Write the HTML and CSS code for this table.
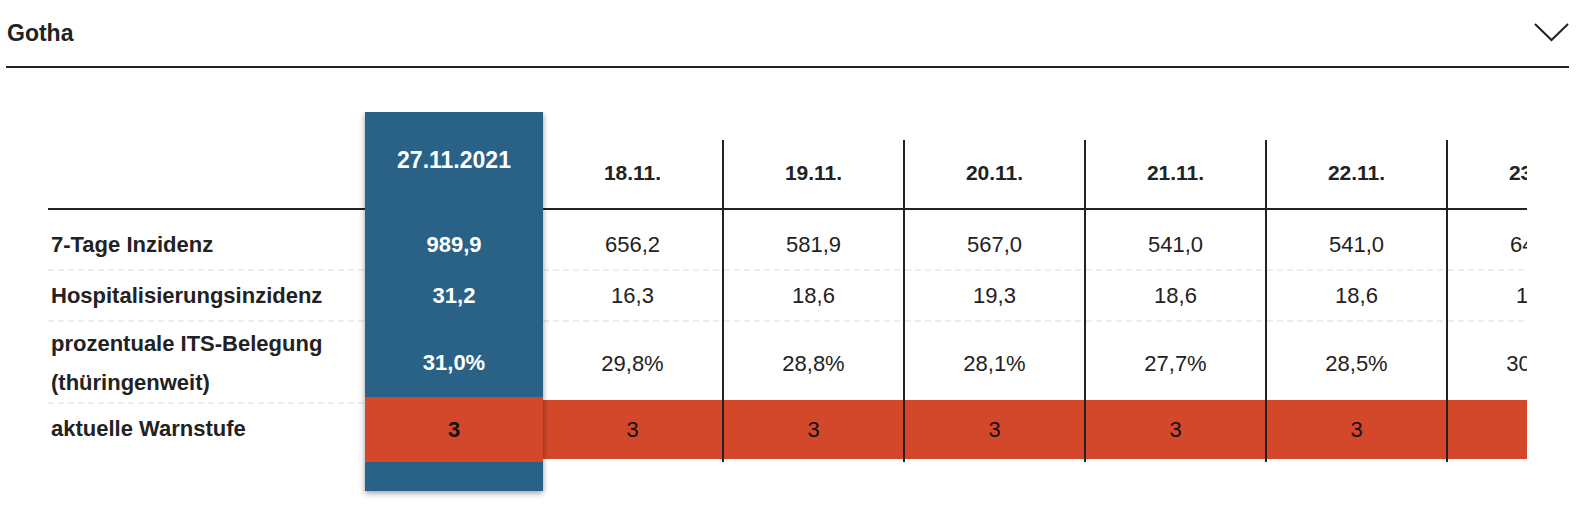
FILE: index.html
```html
<!DOCTYPE html>
<html lang="de">
<head>
<meta charset="utf-8">
<title>Gotha</title>
<link rel="stylesheet" href="styles.css">
</head>
<body>
<header class="panel-head">
  <h2 class="title">Gotha</h2>
  <svg class="chev" width="36" height="20" viewBox="0 0 36 20" aria-hidden="true">
    <polyline points="1,2 17.5,18 34,2" fill="none" stroke="#222" stroke-width="2"/>
  </svg>
</header>
<div class="table">
  <div class="col labels">
    <div class="cell head"></div>
    <div class="cell r1">7-Tage Inzidenz</div>
    <div class="cell r2">Hospitalisierungsinzidenz</div>
    <div class="cell r3">prozentuale ITS-Belegung<br>(thüringenweit)</div>
    <div class="cell r4">aktuelle Warnstufe</div>
  </div>
  <div class="col current">
    <div class="cell head">27.11.2021</div>
    <div class="cell r1">989,9</div>
    <div class="cell r2">31,2</div>
    <div class="cell r3">31,0%</div>
    <div class="cell r4 warn">3</div>
  </div>
  <div class="col day">
    <div class="cell head">18.11.</div>
    <div class="cell r1">656,2</div>
    <div class="cell r2">16,3</div>
    <div class="cell r3">29,8%</div>
    <div class="cell r4 warn">3</div>
  </div>
  <div class="col day">
    <div class="cell head">19.11.</div>
    <div class="cell r1">581,9</div>
    <div class="cell r2">18,6</div>
    <div class="cell r3">28,8%</div>
    <div class="cell r4 warn">3</div>
  </div>
  <div class="col day">
    <div class="cell head">20.11.</div>
    <div class="cell r1">567,0</div>
    <div class="cell r2">19,3</div>
    <div class="cell r3">28,1%</div>
    <div class="cell r4 warn">3</div>
  </div>
  <div class="col day">
    <div class="cell head">21.11.</div>
    <div class="cell r1">541,0</div>
    <div class="cell r2">18,6</div>
    <div class="cell r3">27,7%</div>
    <div class="cell r4 warn">3</div>
  </div>
  <div class="col day">
    <div class="cell head">22.11.</div>
    <div class="cell r1">541,0</div>
    <div class="cell r2">18,6</div>
    <div class="cell r3">28,5%</div>
    <div class="cell r4 warn">3</div>
  </div>
  <div class="col day">
    <div class="cell head">23.11.</div>
    <div class="cell r1">645,4</div>
    <div class="cell r2">17,9</div>
    <div class="cell r3">30,2%</div>
    <div class="cell r4 warn">3</div>
  </div>
</div>
</body>
</html>
```
FILE: styles.css
```css
* { box-sizing: border-box; }

html, body {
  margin: 0;
  padding: 0;
  background: #fff;
}

body {
  font-family: "Liberation Sans", Arial, Helvetica, sans-serif;
  color: #222;
}

.panel-head {
  display: flex;
  align-items: center;
  justify-content: space-between;
  height: 68px;
  margin: 0 8px 0 6px;
  border-bottom: 2px solid #222;
}

.title {
  margin: 0 0 0 1px;
  font-size: 23px;
  font-weight: bold;
  color: #222;
}

.chev {
  display: block;
  margin-right: -1px;
  margin-top: -2px;
}

.table {
  display: flex;
  align-items: flex-start;
  width: 1479px;
  margin: 44px 0 0 48px;
  overflow: hidden;
  padding-bottom: 12px;
}

.col {
  flex: 0 0 auto;
  display: flex;
  flex-direction: column;
}

.cell {
  display: flex;
  align-items: center;
  justify-content: center;
  font-size: 22px;
  white-space: nowrap;
}

.labels, .day { margin-top: 28px; }

.labels { width: 317px; }
.labels .cell {
  justify-content: flex-start;
  padding-left: 3px;
  font-weight: bold;
}

.day {
  width: 181px;
  border-right: 2px solid #222;
  padding-bottom: 3px;
}

.head {
  height: 70px;
  border-bottom: 2px solid #222;
}
.day .head {
  padding-bottom: 3px;
  font-size: 21px;
  font-weight: bold;
}

.r1, .r2, .labels .r3 {
  background-image: repeating-linear-gradient(to right, #ededed 0 6px, transparent 6px 10px);
  background-size: 100% 2px;
  background-position: left bottom;
  background-repeat: no-repeat;
}

.r1 { height: 61px; padding-top: 10px; padding-bottom: 2px; }
.r2 { height: 51px; padding-bottom: 2px; }

.labels .r3 {
  height: 82px;
  padding-top: 2px;
  padding-bottom: 2px;
  line-height: 39px;
  white-space: normal;
}
.labels .r4 { height: 50px; }

.day .r3 { height: 78px; padding-top: 5px; }
.day .r4 { height: 59px; }

.warn {
  background: #d3472b;
  color: #111;
}

.current {
  position: relative;
  z-index: 1;
  width: 178px;
  background: #2a6287;
  box-shadow: 0 2px 6px rgba(0, 0, 0, 0.4);
  padding-bottom: 29px;
  color: #fff;
}
.current .cell { font-weight: bold; }
.current .r1, .current .r2 { background-image: none; }
.current .head {
  height: 98px;
  border-bottom: 0;
  padding-bottom: 2px;
  font-size: 23px;
}
.current .r3 { height: 75px; padding-top: 7px; }
.current .r4 { height: 65px; }
.current .warn { color: #111; }
```
